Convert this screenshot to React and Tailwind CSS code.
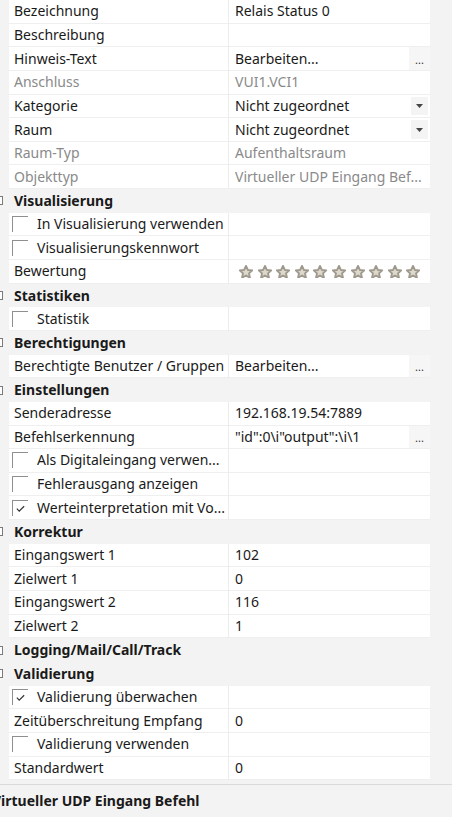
import React from 'react';

const rows = [
  { type: 'prop', label: 'Bezeichnung', value: 'Relais Status 0' },
  { type: 'prop', label: 'Beschreibung', value: '' },
  { type: 'prop', label: 'Hinweis-Text', value: 'Bearbeiten...', button: 'dots' },
  { type: 'prop', label: 'Anschluss', value: 'VUI1.VCI1', disabled: true },
  { type: 'prop', label: 'Kategorie', value: 'Nicht zugeordnet', button: 'arrow' },
  { type: 'prop', label: 'Raum', value: 'Nicht zugeordnet', button: 'arrow' },
  { type: 'prop', label: 'Raum-Typ', value: 'Aufenthaltsraum', disabled: true },
  { type: 'prop', label: 'Objekttyp', value: 'Virtueller UDP Eingang Bef...', disabled: true },
  { type: 'header', label: 'Visualisierung' },
  { type: 'check', label: 'In Visualisierung verwenden' },
  { type: 'check', label: 'Visualisierungskennwort' },
  { type: 'prop', label: 'Bewertung', stars: true },
  { type: 'header', label: 'Statistiken' },
  { type: 'check', label: 'Statistik' },
  { type: 'header', label: 'Berechtigungen' },
  { type: 'prop', label: 'Berechtigte Benutzer / Gruppen', value: 'Bearbeiten...', button: 'dots' },
  { type: 'header', label: 'Einstellungen' },
  { type: 'prop', label: 'Senderadresse', value: '192.168.19.54:7889' },
  { type: 'prop', label: 'Befehlserkennung', value: '"id":0\\i"output":\\i\\1', button: 'dots' },
  { type: 'check', label: 'Als Digitaleingang verwen...' },
  { type: 'check', label: 'Fehlerausgang anzeigen' },
  { type: 'check', label: 'Werteinterpretation mit Vo...', checked: true },
  { type: 'header', label: 'Korrektur' },
  { type: 'prop', label: 'Eingangswert 1', value: '102' },
  { type: 'prop', label: 'Zielwert 1', value: '0' },
  { type: 'prop', label: 'Eingangswert 2', value: '116' },
  { type: 'prop', label: 'Zielwert 2', value: '1' },
  { type: 'header', label: 'Logging/Mail/Call/Track' },
  { type: 'header', label: 'Validierung' },
  { type: 'check', label: 'Validierung überwachen', checked: true },
  { type: 'prop', label: 'Zeitüberschreitung Empfang', value: '0' },
  { type: 'check', label: 'Validierung verwenden' },
  { type: 'prop', label: 'Standardwert', value: '0' },
];

const Star = () => (
  <svg viewBox="1.5 1.5 21 20" className="w-[14px] h-[13.5px]">
    <path
      d="M12 2.8l2.8 6 6.6.7-4.9 4.5 1.4 6.5L12 17.2l-5.9 3.3 1.4-6.5-4.9-4.5 6.6-.7z"
      fill="#ddd8cc"
      stroke="#9e998c"
      strokeWidth="2.8"
      strokeLinejoin="round"
    />
  </svg>
);

const Checkbox = ({ checked }) => (
  <div className="w-[16px] h-[16px] border-t border-l border-[#8f8f8f] ml-[3px] mr-[9px] flex items-center justify-center shrink-0">
    {checked && (
      <svg viewBox="0 0 12 12" className="w-[11px] h-[11px]">
        <path d="M2 6.2l2.6 2.6L10 3.6" fill="none" stroke="#333" strokeWidth="1.3" />
      </svg>
    )}
  </div>
);

const RowButton = ({ kind }) => {
  if (kind === 'dots') {
    return (
      <div className="w-[21px] self-stretch bg-[#f6f6f6] flex items-end justify-center pb-[5px] text-[#333] text-[11px] leading-none">
        ...
      </div>
    );
  }
  return (
    <div className="w-[17px] mr-[2px] my-[2px] self-stretch bg-[#f4f4f4] flex items-center justify-center">
      <svg viewBox="0 0 7 4" className="w-[7px] h-[4px]">
        <path d="M0 0h7L3.5 4z" fill="#444" />
      </svg>
    </div>
  );
};

const PropRow = ({ row }) => {
  const text = row.disabled ? 'text-[#8a8a8a]' : 'text-[#1a1a1a]';
  if (row.type === 'header') {
    return (
      <div className="h-[23.65px] flex items-center bg-[#f3f3f3]">
        <div className="w-[14px] h-full flex items-center overflow-hidden shrink-0">
          <div className="w-[9px] h-[9px] -ml-[6px] border border-[#7a7a7a] bg-white shrink-0" />
        </div>
        <span className="font-bold text-[#1a1a1a]">{row.label}</span>
      </div>
    );
  }
  return (
    <div className="h-[23.65px] flex bg-[#f3f3f3]">
      <div className="w-[9px] shrink-0" />
      <div className="w-[219px] shrink-0 bg-white border-b border-[#efefef] flex items-center overflow-hidden whitespace-nowrap">
        {row.type === 'check' ? (
          <>
            <Checkbox checked={row.checked} />
            <span className="text-[#1a1a1a]">{row.label}</span>
          </>
        ) : (
          <span className={`pl-[5px] ${text}`}>{row.label}</span>
        )}
      </div>
      <div className="w-px shrink-0 bg-[#ececec]" />
      <div className="w-[201px] shrink-0 bg-white border-b border-[#efefef] flex items-center overflow-hidden whitespace-nowrap">
        {row.stars ? (
          <div className="flex gap-[4.6px] pl-[10px]">
            {Array.from({ length: 10 }).map((_, i) => (
              <Star key={i} />
            ))}
          </div>
        ) : (
          <span className={`flex-1 pl-[6px] ${text}`}>{row.value}</span>
        )}
        {row.button && <RowButton kind={row.button} />}
      </div>
    </div>
  );
};

export default function App() {
  return (
    <div
      className="w-[452px] h-[817px] bg-[#f3f3f3] overflow-hidden flex flex-col text-[14px] leading-none"
      style={{ fontFamily: '"Noto Sans", "Open Sans", sans-serif' }}
    >
      <div className="flex flex-col">
        {rows.map((row, i) => (
          <PropRow key={i} row={row} />
        ))}
      </div>
      <div className="h-[4px]" />
      <div className="border-t border-[#dadada] flex-1 overflow-hidden">
        <div className="-ml-[8px] pt-[9px] font-bold text-[#1a1a1a] whitespace-nowrap">
          Virtueller UDP Eingang Befehl
        </div>
      </div>
    </div>
  );
}
